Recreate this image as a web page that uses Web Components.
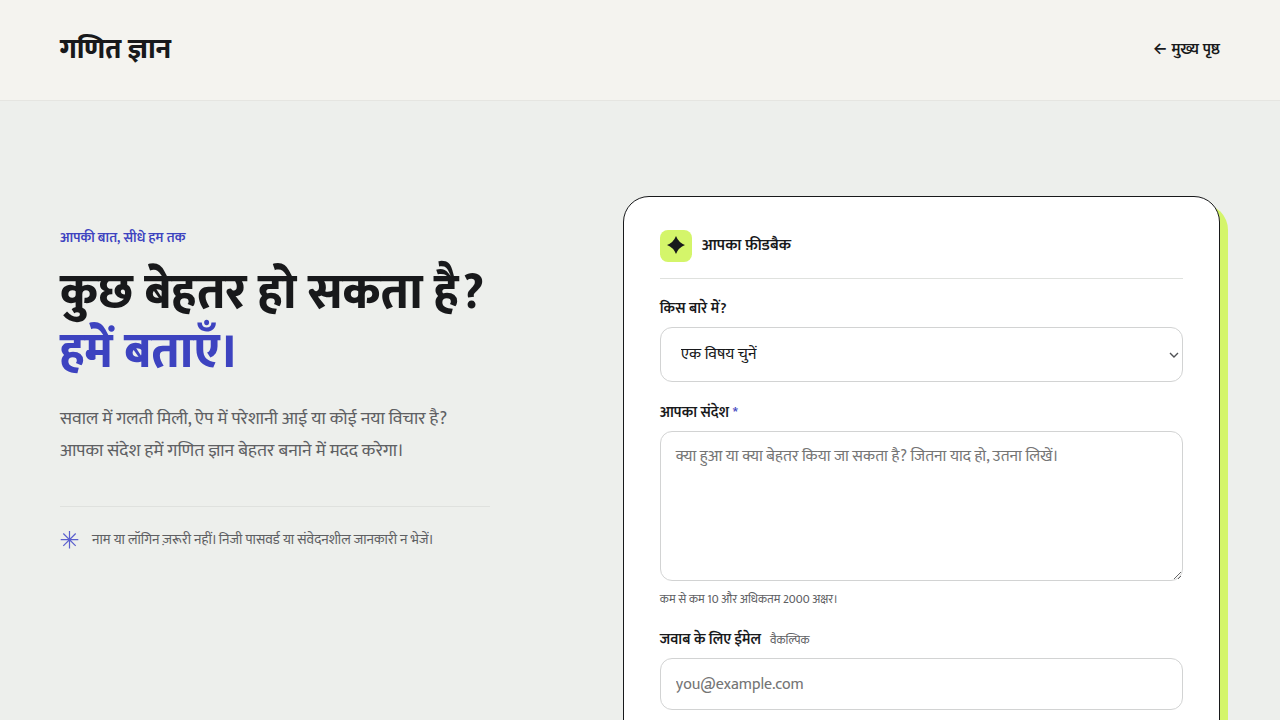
<!DOCTYPE html>
<html lang="hi">
<head>
<meta charset="utf-8">
<meta name="viewport" content="width=device-width, initial-scale=1">
<title>गणित ज्ञान</title>
<style>
  :root {
    --ink: #18191b;
    --muted: #5e6063;
    --accent: #3d43c0;
    --lime: #d4f56a;
    --paper: #f4f3ef;
    --ground: #edefec;
    --line: #dfe1de;
    --field-line: #d2d3d3;
  }
  body {
    margin: 0;
    background: var(--ground);
    color: var(--ink);
    font: 16px/24px Mukta, Inter, "Noto Sans", "Noto Sans Devanagari", sans-serif;
  }
</style>
</head>
<body>
<feedback-page></feedback-page>
<script>
class BaseElement extends HTMLElement {
  constructor() {
    super();
    this.attachShadow({ mode: 'open' }).innerHTML =
      '<style>*{box-sizing:border-box}</style>' + this.constructor.markup;
  }
}

class SiteHeader extends BaseElement {
  static markup = `
    <style>
      :host { display: block; background: var(--paper); border-bottom: 1px solid #e5e5e1; }
      header { display: flex; align-items: center; justify-content: space-between; min-height: 100px; padding: 0 60px; }
      a { color: inherit; text-decoration: none; }
      .brand { font-size: 28px; line-height: 40px; font-weight: 800; }
      .back { font-size: 16px; line-height: 24px; font-weight: 600; }
    </style>
    <header>
      <a class="brand" href="#"><slot></slot></a>
      <a class="back" href="#"><slot name="back"></slot></a>
    </header>`;
}

class FeedbackIntro extends BaseElement {
  static markup = `
    <style>
      :host { display: block; max-width: 430px; padding-top: 30px; }
      .eyebrow { margin: 0 0 14px; color: var(--accent); font-size: 14px; line-height: 24px; font-weight: 600; }
      h1 { margin: 0; font-size: 49px; line-height: 59px; font-weight: 800; white-space: nowrap; }
      h1 span { display: block; color: var(--accent); }
      .lead { margin: 21px 0 39px; color: var(--muted); font-size: 18px; line-height: 32px; white-space: nowrap; }
      .note { display: flex; align-items: center; gap: 12px; padding-top: 21px; border-top: 1px solid var(--line); color: var(--muted); font-size: 14px; line-height: 24px; white-space: nowrap; }
      .note p { margin: 0; }
      svg { flex: none; width: 20px; height: 20px; stroke: #5a5fce; stroke-width: 1.2; }
    </style>
    <p class="eyebrow">आपकी बात, सीधे हम तक</p>
    <h1>कुछ बेहतर हो सकता है? <span>हमें बताएँ।</span></h1>
    <p class="lead">सवाल में गलती मिली, ऐप में परेशानी आई या कोई नया विचार है?<br>आपका संदेश हमें गणित ज्ञान बेहतर बनाने में मदद करेगा।</p>
    <div class="note">
      <svg viewBox="0 0 20 20" fill="none" aria-hidden="true"><path d="M9.500 1v17.500M.7 9.700h17.600M3.300 3.500l12.400 12.400M15.700 3.500L3.300 15.900"/></svg>
      <p>नाम या लॉगिन ज़रूरी नहीं। निजी पासवर्ड या संवेदनशील जानकारी न भेजें।</p>
    </div>`;
}

class FormField extends BaseElement {
  static markup = `
    <style>
      :host { display: flex; flex-direction: column; }
      .label { display: flex; align-items: baseline; gap: 9px; margin-bottom: 6px; }
      .hint { color: var(--muted); font-size: 12px; line-height: 20px; }
      ::slotted([slot="hint"]) { display: block; margin-top: 8px; }
    </style>
    <div class="label"><slot name="label"></slot></div>
    <slot></slot>
    <div class="hint"><slot name="hint"></slot></div>`;
}

class FeedbackCard extends BaseElement {
  static markup = `
    <style>
      :host { display: block; padding: 33px 36px 36px; background: #fff; border: 1px solid var(--ink); border-radius: 26px; box-shadow: 8px 8px 0 var(--lime); }
      .head { display: flex; align-items: center; gap: 10px; padding-bottom: 16px; border-bottom: 1px solid var(--line); }
      .badge { display: grid; place-items: center; width: 32px; height: 32px; padding-bottom: 2px; border-radius: 8px; background: var(--lime); }
      .badge svg { width: 18px; height: 18px; fill: var(--ink); }
      h2 { margin: 0; font-size: 16px; line-height: 32px; font-weight: 600; }
      form { display: grid; gap: 19px; padding-top: 18px; }
      label { font-size: 15px; line-height: 24px; font-weight: 600; }
      .mark { color: var(--accent); }
      .optional { color: var(--muted); font-size: 12px; line-height: 20px; }
      select, textarea, input { display: block; width: 100%; margin: 0; border: 1px solid var(--field-line); border-radius: 12px; background: #fff; color: var(--ink); font: inherit; }
      select {
        height: 55px; padding: 0 20px; appearance: none;
        background: #fff url("data:image/svg+xml,%3Csvg xmlns='http://www.w3.org/2000/svg' width='10' height='8' viewBox='0 0 10 8'%3E%3Cpath d='M1 2l4 4 4-4' fill='none' stroke='%23505255' stroke-width='1.400'/%3E%3C/svg%3E") no-repeat right 3px center;
      }
      textarea { height: 150px; padding: 12px 15px; line-height: 26px; resize: vertical; }
      input { height: 52px; padding: 0 15px; }
      ::placeholder { color: #757575; opacity: 1; }
    </style>
    <div class="head">
      <span class="badge"><svg viewBox="0 0 18 18" aria-hidden="true"><path d="M9 0Q11.500 6.500 18 9Q11.500 11.500 9 18Q6.500 11.500 0 9Q6.500 6.500 9 0Z"/></svg></span>
      <h2>आपका फ़ीडबैक</h2>
    </div>
    <form>
      <form-field>
        <label slot="label" for="topic">किस बारे में?</label>
        <select id="topic"><option>एक विषय चुनें</option></select>
      </form-field>
      <form-field>
        <label slot="label" for="message">आपका संदेश <span class="mark">*</span></label>
        <textarea id="message" required minlength="10" maxlength="2000" placeholder="क्या हुआ या क्या बेहतर किया जा सकता है? जितना याद हो, उतना लिखें।"></textarea>
        <span slot="hint">कम से कम 10 और अधिकतम 2000 अक्षर।</span>
      </form-field>
      <form-field>
        <label slot="label" for="email">जवाब के लिए ईमेल</label>
        <span slot="label" class="optional">वैकल्पिक</span>
        <input id="email" type="email" placeholder="you@example.com">
      </form-field>
    </form>`;
}

class FeedbackPage extends BaseElement {
  static markup = `
    <style>
      :host { display: block; }
      main { display: grid; grid-template-columns: minmax(0, 4fr) minmax(0, 5fr); gap: 85px; align-items: start; padding: 95px 60px; }
      @media (max-width: 900px) { main { grid-template-columns: minmax(0, 1fr); gap: 40px; padding: 40px 24px; } }
    </style>
    <site-header>गणित ज्ञान<span slot="back">← मुख्य पृष्ठ</span></site-header>
    <main>
      <feedback-intro></feedback-intro>
      <feedback-card></feedback-card>
    </main>`;
}

customElements.define('site-header', SiteHeader);
customElements.define('feedback-intro', FeedbackIntro);
customElements.define('form-field', FormField);
customElements.define('feedback-card', FeedbackCard);
customElements.define('feedback-page', FeedbackPage);
</script>
</body>
</html>
